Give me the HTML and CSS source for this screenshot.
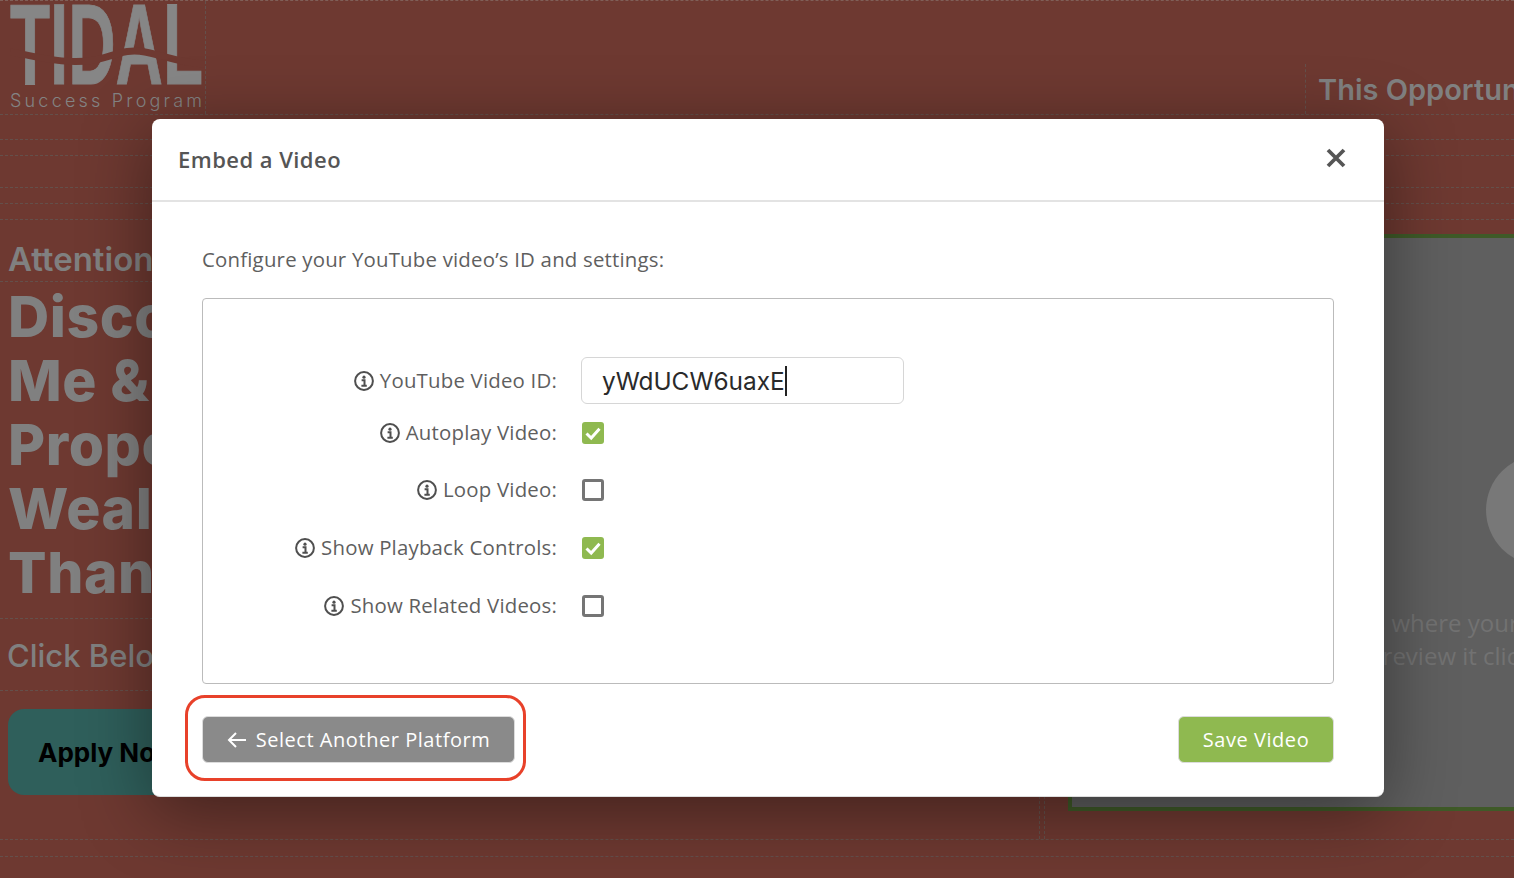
FILE: index.html
```html
<!DOCTYPE html>
<html lang="en">
<head>
<meta charset="utf-8">
<title>Embed a Video</title>
<link rel="stylesheet" href="styles.css">
</head>
<body>
<div class="page">
  <header class="top">
    <div class="logo">
      <svg class="logo-mark" width="195" height="86" viewBox="0 0 195 86" role="img" aria-label="TIDAL">
        <text class="logo-text" x="0" y="83" textLength="193" lengthAdjust="spacingAndGlyphs">TIDAL</text>
        <path class="logo-wave" d="M0 51 C30 56 55 64 85 59 C105 55 115 47 135 51 C155 55 170 62 195 63"/>
      </svg>
      <div class="logo-sub">Success Program</div>
    </div>
    <div class="top-title">This Opportunity</div>
  </header>

  <div class="rules">
    <div class="rule rule-a"></div>
    <div class="rule rule-b"></div>
    <div class="rule rule-c"></div>
    <div class="rule rule-b"></div>
    <div class="rule rule-b"></div>
  </div>

  <main class="main">
    <section class="left">
      <div class="eyebrow">Attention</div>
      <h1 class="headline">Discover<br>Me &amp; My<br>Property<br>Wealth<br>Than</h1>
      <div class="click">Click Below</div>
      <div class="apply">Apply Now</div>
    </section>
    <section class="right">
      <div class="video">
        <div class="video-circle"></div>
        <p class="video-text"><span class="line-one">This is where your video</span><span class="line-two">To preview it click here</span></p>
      </div>
    </section>
  </main>
  <div class="bottom-rule"></div>

  <div class="modal">
    <div class="modal-head">
      <h2 class="modal-title">Embed a Video</h2>
      <svg class="close" width="20" height="20" viewBox="0 0 20 20"><path d="M2 2 L18 18 M18 2 L2 18"/></svg>
    </div>
    <div class="modal-body">
      <p class="intro">Configure your YouTube video’s ID and settings:</p>
      <div class="settings">
        <div class="row row-input">
          <label class="label">
            <svg class="info" viewBox="0 0 20 20"><circle cx="10" cy="10" r="8.9"/><circle class="dot" cx="10" cy="6.2" r="1.6"/><path d="M7.6 9.3 H10.5 V14.6 M7.4 14.8 H12.8"/></svg>
            YouTube Video ID:
          </label>
          <div class="input"><span>yWdUCW6uaxE</span><i class="caret"></i></div>
        </div>
        <div class="row">
          <label class="label">
            <svg class="info" viewBox="0 0 20 20"><circle cx="10" cy="10" r="8.9"/><circle class="dot" cx="10" cy="6.2" r="1.6"/><path d="M7.6 9.3 H10.5 V14.6 M7.4 14.8 H12.8"/></svg>
            Autoplay Video:
          </label>
          <div class="check on"><svg viewBox="0 0 22 22"><path d="M4.5 11.5 L9.2 16 L17.5 6.8"/></svg></div>
        </div>
        <div class="row">
          <label class="label">
            <svg class="info" viewBox="0 0 20 20"><circle cx="10" cy="10" r="8.9"/><circle class="dot" cx="10" cy="6.2" r="1.6"/><path d="M7.6 9.3 H10.5 V14.6 M7.4 14.8 H12.8"/></svg>
            Loop Video:
          </label>
          <div class="check"></div>
        </div>
        <div class="row">
          <label class="label">
            <svg class="info" viewBox="0 0 20 20"><circle cx="10" cy="10" r="8.9"/><circle class="dot" cx="10" cy="6.2" r="1.6"/><path d="M7.6 9.3 H10.5 V14.6 M7.4 14.8 H12.8"/></svg>
            Show Playback Controls:
          </label>
          <div class="check on"><svg viewBox="0 0 22 22"><path d="M4.5 11.5 L9.2 16 L17.5 6.8"/></svg></div>
        </div>
        <div class="row">
          <label class="label">
            <svg class="info" viewBox="0 0 20 20"><circle cx="10" cy="10" r="8.9"/><circle class="dot" cx="10" cy="6.2" r="1.6"/><path d="M7.6 9.3 H10.5 V14.6 M7.4 14.8 H12.8"/></svg>
            Show Related Videos:
          </label>
          <div class="check"></div>
        </div>
      </div>
      <div class="actions">
        <div class="back-wrap">
          <button class="btn btn-grey">
            <svg class="arrow" width="20" height="18" viewBox="0 0 20 18"><path d="M19 9 H2 M9 2 L2 9 L9 16"/></svg>
            Select Another Platform
          </button>
          <div class="annotation"></div>
        </div>
        <button class="btn btn-green">Save Video</button>
      </div>
    </div>
  </div>
</div>
</body>
</html>
```
FILE: styles.css
```css
* { box-sizing: border-box; }
html, body { margin: 0; padding: 0; }
body { font-family: "Open Sans", "Liberation Sans", sans-serif; }

.page {
  position: relative;
  width: 1514px;
  height: 878px;
  overflow: hidden;
  background: #6e3931;
  color: #808080;
  font-family: Inter, "Liberation Sans", sans-serif;
  border-top: 1px dashed #7f5f58;
}

/* backdrop page */
.top {
  display: flex;
  justify-content: space-between;
  height: 114px;
  border-bottom: 1px dashed #64504b;
}
.logo {
  width: 206px;
  padding: 0 0 0 10px;
  border-right: 1px dashed #64504b;
}
.logo-mark { display: block; }
.logo-text {
  font-family: "Liberation Sans", sans-serif;
  font-weight: 700;
  font-size: 115px;
  fill: #868686;
  stroke: #868686;
  stroke-width: 1;
}
.logo-wave {
  fill: none;
  stroke: #6e3931;
  stroke-width: 7;
}
.logo-sub {
  font-size: 18px;
  font-weight: 300;
  letter-spacing: 3.2px;
  line-height: 22px;
  margin-top: 3px;
  white-space: nowrap;
  color: #838383;
}
.top-title {
  align-self: flex-end;
  width: 209px;
  height: 50px;
  padding: 8px 0 0 12px;
  border-left: 1px dashed #64504b;
  font-size: 29px;
  font-weight: 600;
  line-height: 36px;
  white-space: nowrap;
  overflow: hidden;
}

.rule { border-bottom: 1px dashed #64504b; }
.rule-a { height: 25px; }
.rule-b { height: 16px; }
.rule-c { height: 32px; }

.main {
  display: flex;
  height: 620px;
  border-bottom: 1px dashed #64504b;
}
.left {
  flex: 0 0 1040px;
  padding-left: 8px;
  border-right: 1px dashed #64504b;
}
.eyebrow {
  height: 62px;
  margin-left: -8px;
  padding: 20px 0 0 8px;
  border-bottom: 1px dashed #64504b;
  font-size: 33px;
  font-weight: 600;
  line-height: 38px;
}
.headline {
  margin: 3px 0 0;
  height: 333px;
  font-size: 57px;
  font-weight: 800;
  line-height: 64px;
  letter-spacing: 0.6px;
  color: #808080;
}
.click {
  height: 73px;
  margin-left: -8px;
  padding: 19px 0 0 7px;
  border-top: 1px dashed #64504b;
  border-bottom: 1px dashed #64504b;
  font-size: 31px;
  font-weight: 500;
  line-height: 36px;
}
.apply {
  width: 400px;
  height: 86px;
  margin-top: 18px;
  padding: 0 0 0 30px;
  background: #2f5f5b;
  border-radius: 16px;
  color: #000;
  font-size: 26px;
  font-weight: 700;
  line-height: 87px;
}
.right {
  flex: none;
  margin-left: 4px;
  padding: 14px 0 0 23px;
  border-left: 1px dashed #64504b;
}
.video {
  width: 946px;
  height: 577px;
  padding-top: 217px;
  background: #5f5f5f;
  border: 4px solid #3f5a28;
}
.video-circle {
  width: 110px;
  height: 110px;
  margin: 0 auto;
  border-radius: 50%;
  background: #787878;
}
.video-text {
  margin: 41px 0 0;
  font-family: "Open Sans", sans-serif;
  font-size: 24px;
  line-height: 33px;
  color: #727272;
  white-space: nowrap;
}
.line-one { display: block; margin-left: 244px; }
.line-two { display: block; margin-left: 262px; }
.bottom-rule {
  height: 17px;
  border-bottom: 1px dashed #64504b;
}

/* modal */
.modal {
  position: absolute;
  left: 152px;
  top: 118px;
  width: 1232px;
  height: 678px;
  background: #fff;
  border-radius: 8px;
  border-bottom: 1px solid #ddd;
  box-shadow: 0 14px 70px rgba(0, 0, 0, 0.42);
  font-family: "Open Sans", "Liberation Sans", sans-serif;
  color: #5c5c5c;
}
.modal-head {
  display: flex;
  align-items: center;
  justify-content: space-between;
  height: 83px;
  padding: 0 38px 0 26px;
  border-bottom: 2px solid #e3e3e3;
}
.modal-title {
  margin: 0 0 2px;
  font-size: 22px;
  font-weight: 600;
  color: #555;
  letter-spacing: 0.45px;
}
.close { margin-bottom: 4px; }
.close path {
  fill: none;
  stroke: #555;
  stroke-width: 3.8;
}
.modal-body { padding: 40px 50px 0; }
.intro {
  margin: 0;
  height: 56px;
  font-size: 20.4px;
  letter-spacing: 0.2px;
  line-height: 34px;
  color: #5f5f5f;
}
.settings {
  display: flex;
  flex-direction: column;
  gap: 35.6px;
  height: 386px;
  padding-top: 58px;
  border: 1px solid #bbb;
  border-radius: 4px;
}
.row {
  display: flex;
  align-items: center;
  gap: 24px;
  height: 22px;
}
.row-input { height: 47px; margin-bottom: -17.8px; }
.label {
  display: flex;
  align-items: center;
  justify-content: flex-end;
  gap: 6px;
  width: 354px;
  margin-bottom: 2px;
  font-size: 20.4px;
  letter-spacing: 0.2px;
  color: #5f5f5f;
  white-space: nowrap;
}
.info {
  width: 20px;
  height: 20px;
  margin-top: 2px;
  flex: none;
  fill: none;
  stroke: #4f4f4f;
  stroke-width: 2;
}
.info .dot { fill: #4f4f4f; stroke: none; }
.input {
  display: flex;
  align-items: center;
  width: 323px;
  height: 47px;
  padding-left: 20px;
  border: 1px solid #d6d6d6;
  border-radius: 6px;
  font-family: Inter, "Liberation Sans", sans-serif;
  font-size: 24.4px;
  color: #2a2a2a;
}
.caret {
  width: 2px;
  height: 30px;
  background: #222;
}
.check {
  width: 22px;
  height: 22px;
  margin-left: 1px;
  border: 3px solid #757575;
  border-radius: 3px;
}
.check.on {
  background: #8fb950;
  border: 0;
}
.check svg {
  display: block;
  fill: none;
  stroke: #fff;
  stroke-width: 3;
}
.actions {
  display: flex;
  justify-content: space-between;
  margin-top: 32px;
}
.back-wrap { position: relative; }
.btn {
  display: flex;
  align-items: center;
  justify-content: center;
  height: 47px;
  border: 1px solid #dcdcdc;
  border-radius: 6px;
  color: #fff;
  font-family: "Open Sans", sans-serif;
  font-size: 20px;
  font-weight: 500;
  letter-spacing: 0.55px;
  white-space: nowrap;
}
.btn-grey {
  gap: 9px;
  width: 313px;
  background: #8a8a8a;
}
.btn-green {
  width: 156px;
  background: #8fb950;
}
.arrow path {
  fill: none;
  stroke: #fff;
  stroke-width: 2;
}
.annotation {
  position: absolute;
  left: -17px;
  top: -21px;
  width: 341px;
  height: 86px;
  border: 3px solid #e8412a;
  border-radius: 20px;
}
```
